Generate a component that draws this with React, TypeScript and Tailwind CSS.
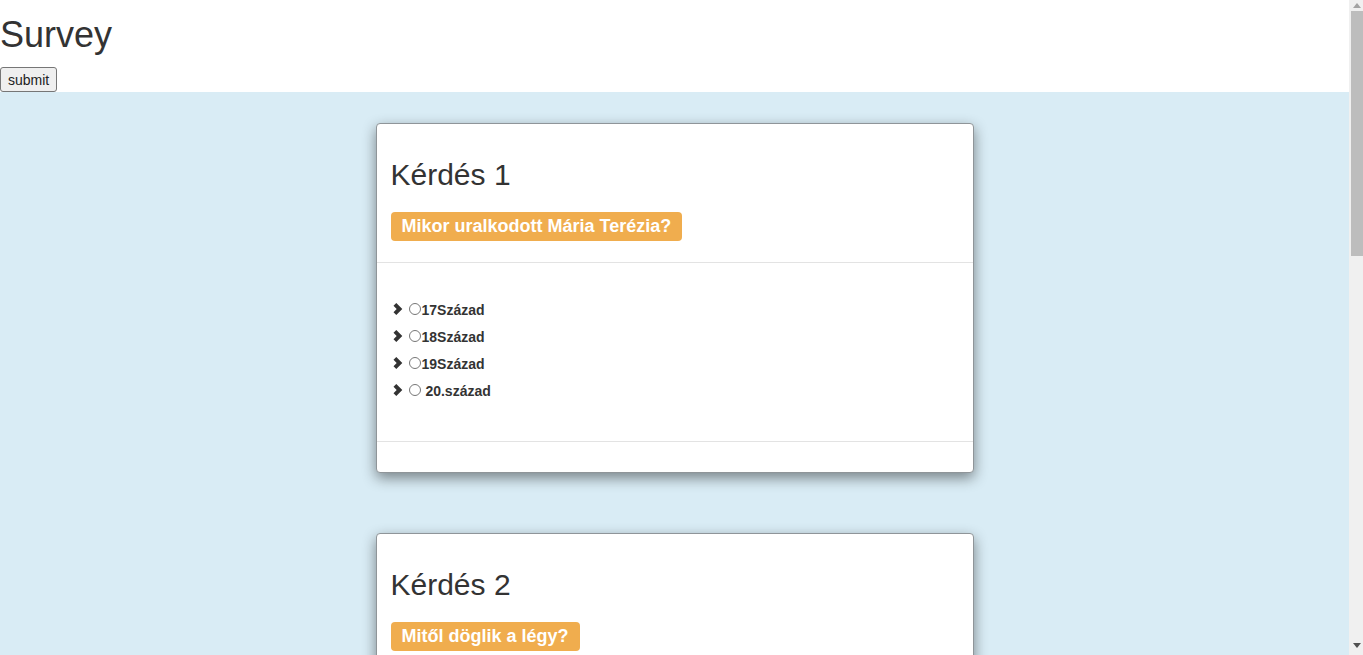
import React from 'react'

type Question = {
  id: number
  text: string
  answers: string[]
}

const questions: Question[] = [
  { id: 1, text: 'Mikor uralkodott Mária Terézia?', answers: ['17Század', '18Század', '19Század', ' 20.század'] },
  { id: 2, text: 'Mitől döglik a légy?', answers: ['Légycsapótól', 'Méregtől', 'Öregségtől', ' Unalomtól'] },
  { id: 3, text: 'Hány lába van a póknak?', answers: ['6', '8', '10', ' 12'] },
]

const Chevron: React.FC = () => (
  <svg width="10" height="12" viewBox="0 0 10 12" className="shrink-0">
    <polygon points="0.5,2.8 3.3,0 9.3,6 3.3,12 0.5,9.2 3.7,6" fill="#333" />
  </svg>
)

const QuestionCard: React.FC<{ q: Question }> = ({ q }) => (
  <div className="mx-auto w-[598px] shrink-0 rounded-[4px] border border-[#8f9599] bg-white shadow-[0_5px_14px_rgba(0,0,0,0.45)]">
    <div className="border-b border-[#e3e3e3] px-[14px] pt-[34px] pb-[21px]">
      <h2 className="text-[30px] leading-[33px] font-normal text-[#333]">Kérdés {q.id}</h2>
      <div className="mt-[21px]">
        <span className="inline-block rounded-[4px] bg-[#f0ad4e] px-[11px] py-[5px] text-[18px] leading-[19px] font-bold text-white">
          {q.text}
        </span>
      </div>
    </div>
    <div className="px-[15px] pt-[37px] pb-[33px]">
      <ul>
        {q.answers.map((a, i) => (
          <li key={i} className="mb-[7px] flex h-[20px] items-center">
            <span className="-mt-[2px] ml-[1px] flex items-center">
              <Chevron />
            </span>
            <input
              type="radio"
              name={`q${q.id}`}
              className="m-0 -mt-[2px] ml-[6px] mr-[1px] h-[12px] w-[12px]"
            />
            <label className="text-[14px] leading-[20px] font-bold text-[#333] whitespace-pre">
              {a}
            </label>
          </li>
        ))}
      </ul>
    </div>
    <div className="h-[31px] border-t border-[#e3e3e3]" />
  </div>
)

const Scrollbar: React.FC = () => (
  <div className="flex w-[14px] shrink-0 flex-col bg-[#f0f0f0]">
    <div className="flex h-[11px] items-center justify-center pl-[2px]">
      <svg width="8" height="5" viewBox="0 0 8 5">
        <polygon points="4,0 8,5 0,5" fill="#a3a3a3" />
      </svg>
    </div>
    <div className="ml-[2px] h-[245px] bg-[#bdbdbd]" />
    <div className="flex-1" />
    <div className="flex h-[12px] items-start justify-center pl-[2px]">
      <svg width="8" height="5" viewBox="0 0 8 5">
        <polygon points="0,0 8,0 4,5" fill="#505050" />
      </svg>
    </div>
  </div>
)

export default function App() {
  return (
    <div className="flex h-[655px] overflow-hidden font-['Liberation_Sans',Arial,sans-serif] text-[#333]">
      <div className="min-w-0 flex-1 overflow-hidden">
        <h1 className="mt-[15px] mb-[12px] text-[36px] leading-[40px] font-normal">Survey</h1>
        <button className="h-[25px] rounded-[3px] border border-[#767676] bg-[#efefef] px-[7px] text-[14px] leading-[20px] text-[#222]">
          submit
        </button>
        <div className="flex flex-col gap-[60px] bg-[#d9ecf5] pt-[31px] pb-[31px]">
          {questions.map((q) => (
            <QuestionCard key={q.id} q={q} />
          ))}
        </div>
      </div>
      <Scrollbar />
    </div>
  )
}
